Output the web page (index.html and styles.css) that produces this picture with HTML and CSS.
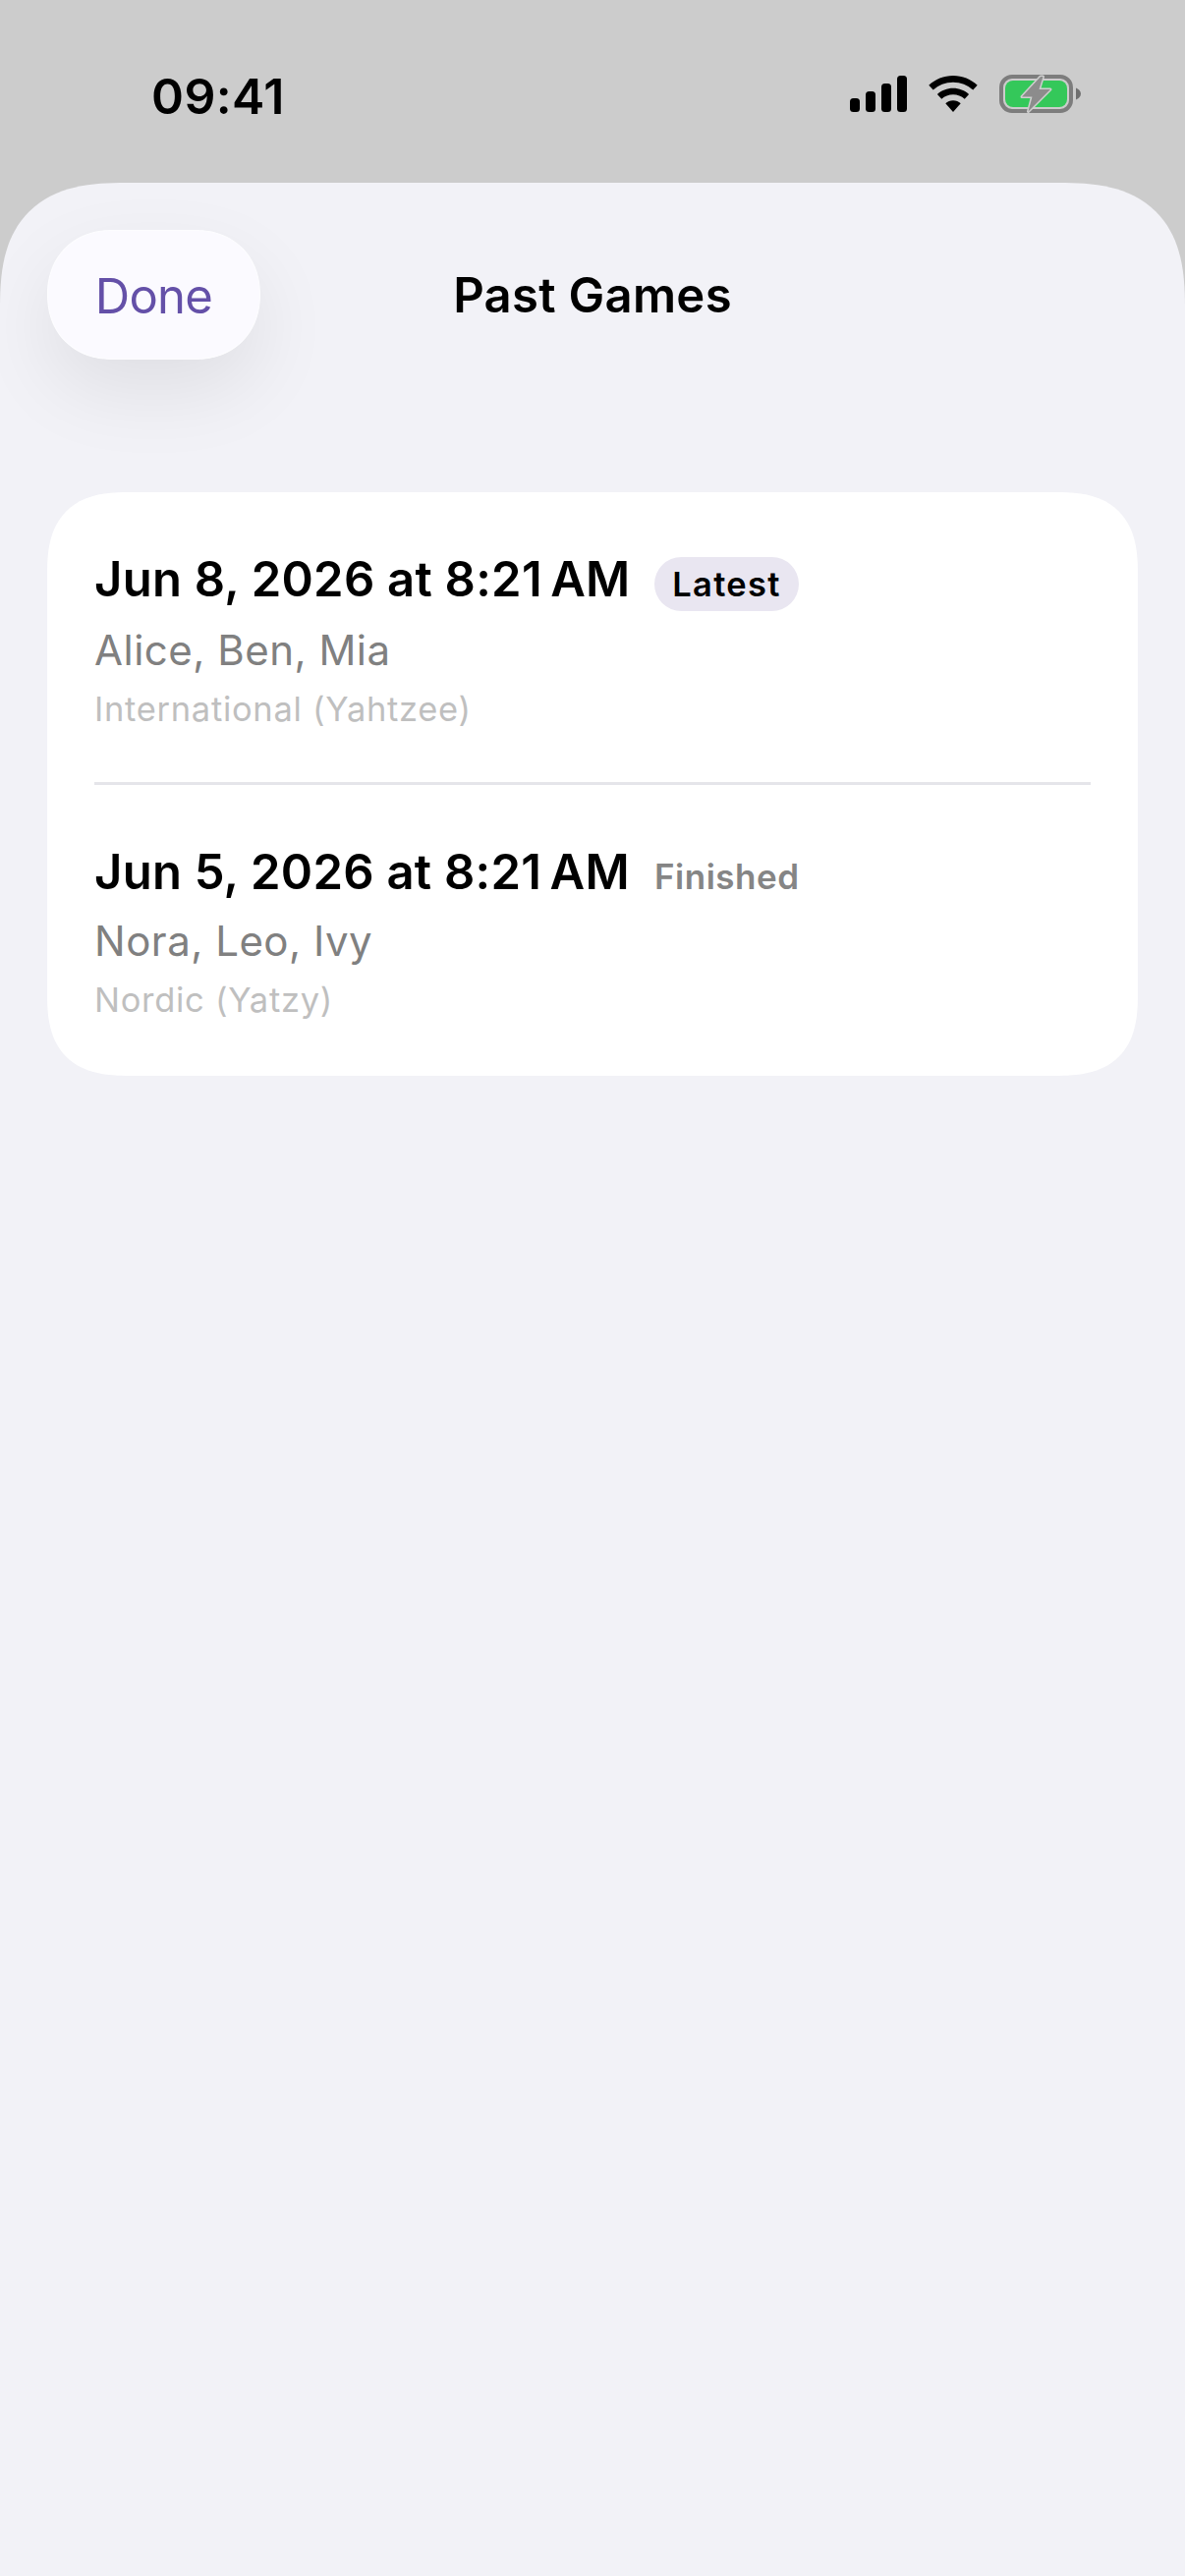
FILE: index.html
```html
<!DOCTYPE html>
<html lang="en">
<head>
    <meta charset="UTF-8">
    <meta name="viewport" content="width=device-width, initial-scale=1.0">
    <title>Past Games</title>
    <link rel="stylesheet" href="styles.css">
</head>
<body>
    <div class="status-bar">
        <span class="time">09:41</span>
        <div class="status-icons">
            <svg width="58" height="37" viewBox="0 0 58 37">
                <rect x="0" y="23" width="10" height="14" rx="3.500"/>
                <rect x="16" y="16" width="10" height="21" rx="3.500"/>
                <rect x="32" y="8" width="10" height="29" rx="3.500"/>
                <rect x="48" y="0" width="10" height="37" rx="3.500"/>
            </svg>
            <svg width="50" height="37" viewBox="0 0 50 37">
                <path d="M25 0C34.500 0 43.200 3.700 49.700 9.700L45.300 14.600C39.900 9.700 32.800 6.700 25 6.700S10.100 9.700 4.700 14.600L.3 9.700C6.800 3.700 15.500 0 25 0Z"/>
                <path d="M25 12.700C31.200 12.700 36.800 15 41.100 18.900L36.700 23.800C33.600 21 29.500 19.300 25 19.300S16.400 21 13.300 23.800L8.900 18.900C13.200 15 18.800 12.700 25 12.700Z"/>
                <path d="M25 25.300C28 25.300 30.600 26.400 32.700 28.200L25 37L17.300 28.200C19.400 26.400 22 25.300 25 25.300Z"/>
            </svg>
            <svg width="83" height="39" viewBox="0 0 83 39">
                <rect x="2" y="2" width="71" height="35" rx="11" fill="none" stroke="#7d7d7d" stroke-width="4"/>
                <rect x="6" y="6" width="63" height="27" rx="8" fill="#34c85a"/>
                <path d="M78 13.500C80.500 14.500 83 16.500 83 19.500S80.500 24.500 78 25.500Z" fill="#6f6f6f"/>
                <path class="bolt" d="M42 2H44.500L40.500 15H52L29.500 37.500L33.500 22.500H23Z"/>
            </svg>
        </div>
    </div>

    <div class="sheet">
        <div class="sheet-header">
            <button class="done-btn" type="button">Done</button>
            <h1>Past Games</h1>
        </div>

        <div class="card">
            <div class="game-row">
                <div class="game-title">
                    <span class="game-date">Jun 8, 2026 at 8:21&#8239;AM</span>
                    <span class="pill">Latest</span>
                </div>
                <div class="game-players">Alice, Ben, Mia</div>
                <div class="game-rules">International (Yahtzee)</div>
            </div>
            <div class="separator"></div>
            <div class="game-row">
                <div class="game-title">
                    <span class="game-date">Jun 5, 2026 at 8:21&#8239;AM</span>
                    <span class="state">Finished</span>
                </div>
                <div class="game-players">Nora, Leo, Ivy</div>
                <div class="game-rules">Nordic (Yatzy)</div>
            </div>
        </div>
    </div>
</body>
</html>
```

FILE: styles.css
```css
html, body {
    height: 100%;
}
body {
    margin: 0;
    display: flex;
    flex-direction: column;
    background: #cccccc;
    font-family: Inter, "Liberation Sans", sans-serif;
    color: #000000;
    overflow: hidden;
}

/* Status bar */
.status-bar {
    height: 186px;
    flex-shrink: 0;
    box-sizing: border-box;
    padding: 10px 106px 0 154px;
    display: flex;
    justify-content: space-between;
    align-items: center;
}
.time {
    font-size: 50px;
    font-weight: 600;
    line-height: 60px;
    letter-spacing: 0.4px;
}
.status-icons {
    display: flex;
    align-items: center;
    gap: 22px;
    margin-top: -6px;
}
.status-icons svg {
    display: block;
}
.bolt {
    fill: #8c8c8c;
    stroke: #cfcfcf;
    stroke-width: 3px;
    stroke-linejoin: round;
    paint-order: stroke;
}

/* Sheet */
.sheet {
    flex: 1;
    overflow: hidden;
    background: #f2f2f7;
    border-radius: 100px 100px 0 0;
    padding: 48px 48px 0;
}
.sheet-header {
    position: relative;
    display: flex;
    justify-content: center;
    align-items: center;
    height: 132px;
    margin-bottom: 135px;
}
.sheet-header h1 {
    margin: 2px 0 0;
    font-size: 49px;
    font-weight: 600;
    line-height: 60px;
    letter-spacing: 0.3px;
}
.done-btn {
    position: absolute;
    left: 0;
    top: 0;
    width: 217px;
    height: 132px;
    padding: 2px 0 0;
    border: 1px solid #fdfdff;
    border-radius: 66px;
    background: #fbfaff;
    color: #6450a8;
    font-family: inherit;
    font-size: 49px;
    font-weight: 400;
    letter-spacing: -0.7px;
    box-shadow: 0 32px 80px rgba(0, 0, 0, 0.08);
}

/* Card */
.card {
    background: #ffffff;
    border-radius: 68px;
    padding: 0 48px;
}
.game-row {
    padding: 59px 0 53px;
}
.game-row:last-child {
    padding-bottom: 56px;
}
.separator {
    height: 3px;
    background: #e5e5ea;
}
.game-title {
    display: flex;
    align-items: baseline;
}
.game-date {
    width: 570px;
    font-size: 49px;
    font-weight: 600;
    line-height: 60px;
    letter-spacing: 0.25px;
    white-space: nowrap;
}
.pill {
    width: 147px;
    height: 55px;
    border-radius: 28px;
    background: #e9e6f1;
    text-align: center;
    font-size: 34.500px;
    font-weight: 600;
    line-height: 55px;
    letter-spacing: 1.300px;
}
.state {
    font-size: 35px;
    font-weight: 600;
    letter-spacing: 0.500px;
    color: #858585;
}
.game-players {
    margin-top: 15px;
    font-size: 42px;
    line-height: 50px;
    letter-spacing: 0.500px;
    color: #808080;
}
.game-rules {
    margin-top: 14px;
    font-size: 34.500px;
    line-height: 42px;
    letter-spacing: 0.700px;
    color: #bfbfbf;
}

/* iOS style continuous corners where the browser has them */
@supports (corner-shape: superellipse(1.5)) {
    .sheet {
        border-radius: 128px 128px 0 0;
        corner-shape: superellipse(1.4);
    }
    .card {
        border-radius: 84px;
        corner-shape: superellipse(1.4);
    }
    .done-btn {
        corner-shape: superellipse(1.1);
    }
}
```
